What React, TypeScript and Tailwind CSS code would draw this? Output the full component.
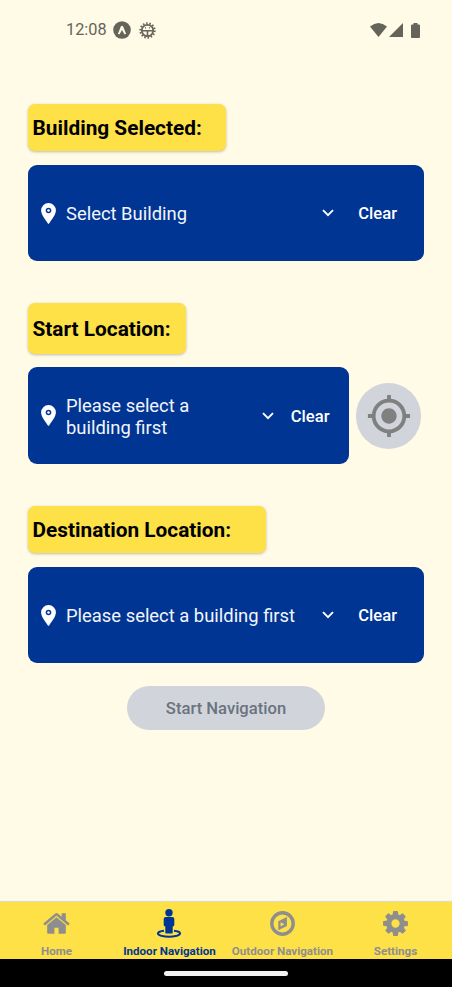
import React from "react";
import { MdMyLocation } from "react-icons/md";

function Pin() {
  return (
    <svg className="h-[21px] w-[15px] shrink-0" viewBox="0 0 15 21">
      <path
        fill="#fff"
        fillRule="evenodd"
        d="M7.500 0A7.400 7.400 0 0 0 .1 7.400C.1 11.600 4.400 16.500 6.700 20.200Q7.500 21.400 8.300 20.200C10.600 16.500 14.900 11.600 14.900 7.400A7.400 7.400 0 0 0 7.500 0ZM7.500 4.700A2.800 2.800 0 1 1 7.500 10.300A2.800 2.800 0 1 1 7.500 4.700Z"
      />
      <circle cx="7.500" cy="7.500" r="1.300" fill="#fff" />
    </svg>
  );
}

function Chevron() {
  return (
    <svg className="h-[8px] w-[12px] shrink-0" viewBox="0 0 12 8" fill="none" stroke="#fff" strokeWidth="1.900">
      <path d="M1 1.200L6 6.200L11 1.200" />
    </svg>
  );
}

function Label({ text, box }: { text: string; box: string }) {
  return (
    <div
      className={`flex items-center rounded-[7px] bg-[#fee047] pl-[4.500px] shadow-[0_1px_3px_rgba(0,0,0,0.25)] ${box}`}
    >
      <h2 className="whitespace-nowrap text-[20.800px] font-bold leading-6 text-black">{text}</h2>
    </div>
  );
}

function Picker({ children, box, wide }: { children: React.ReactNode; box: string; wide?: boolean }) {
  return (
    <div className={`flex items-center rounded-[9px] bg-[#003594] pl-[13px] ${box}`}>
      <Pin />
      <div className="ml-[10px] flex-1 whitespace-nowrap pt-[2px] text-[18.400px] leading-[22px] text-[#f3f5fa]">{children}</div>
      <Chevron />
      <button className={`pt-[2px] text-[16.600px] font-medium leading-5 text-white ${wide ? "mr-[27px] ml-[24px]" : "mr-[19.500px] ml-[17px]"}`}>
        Clear
      </button>
    </div>
  );
}

function StatusBar() {
  return (
    <header className="flex h-[60px] items-center pl-[66px] pr-[32px] text-[#65645b]">
      <span className="w-[41px] text-[16.300px]">12:08</span>
      <svg className="ml-[6px] size-[18px]" viewBox="0 0 18 18">
        <circle cx="9" cy="9" r="8.800" fill="#65645b" />
        <path d="M4.900 12.900L7.700 5.800Q9 3.600 10.300 5.800L13.100 12.900L11.400 13.200L9 8.900L6.600 13.200Z" fill="#fffbe6" />
      </svg>
      <svg className="ml-[8px] size-[17px]" viewBox="0 0 17 17" fill="none" stroke="#65645b">
        <circle cx="8.500" cy="8.500" r="7.200" strokeWidth="2" strokeDasharray="1.500 1.730" />
        <circle cx="8.500" cy="8.500" r="5.700" strokeWidth="1.700" />
        <path d="M2.500 8.700h12M8.500 8.700v5.500" strokeWidth="1.600" />
        <path d="M5.900 5.900h1.200M9.900 5.900h1.200" strokeWidth="1.200" />
      </svg>
      <div className="ml-auto flex items-center">
        <svg className="h-[14px] w-[17px]" viewBox="0 0 17 14" fill="#65645b">
          <path d="M0 3.500Q8.500 -3.500 17 3.500L8.500 14Z" />
        </svg>
        <svg className="ml-[2px] h-[14px] w-[14px]" viewBox="0 0 14 14" fill="#65645b">
          <path d="M14 0V14H0Z" />
        </svg>
        <svg className="ml-[8px] h-[15px] w-[9px]" viewBox="0 0 9 15" fill="#65645b">
          <path d="M2.500 0h4v1.500H8q1 0 1 1V14q0 1-1 1H1q-1 0-1-1V2.500q0-1 1-1h1.500Z" />
        </svg>
      </div>
    </header>
  );
}

function HomeIcon() {
  return (
    <svg className="size-[29px]" viewBox="0 0 1792 1792" fill="#8e8e8f">
      <path d="M1472 992v480q0 26-19 45t-45 19h-384v-384h-256v384h-384q-26 0-45-19t-19-45v-480q0-1 .5-3t.5-3l575-474 575 474q1 2 1 6zm223-69l-62 74q-8 9-21 11h-3q-13 0-21-7l-692-577-692 577q-12 8-24 7-13-2-21-11l-62-74q-8-10-7-23.500t11-21.500l719-599q32-26 76-26t76 26l244 204v-195q0-14 9-23t23-9h192q14 0 23 9t9 23v408l219 182q10 8 11 21.500t-7 23.500z" />
    </svg>
  );
}

function PersonIcon() {
  return (
    <svg className="mr-px h-[29px] w-[24px]" viewBox="0 0 24 29" fill="#003594">
      <circle cx="12" cy="3.800" r="3.700" />
      <path d="M8.800 8h6.400q2.100 0 2.100 2.100v6q0 1.300-1.600 1.300v6q0 1.200-1.200 1.200h-5q-1.200 0-1.200-1.200v-6q-1.600 0-1.600-1.300v-6Q6.700 8 8.800 8Z" />
      <path
        d="M7 21.800C-.2 22.600-.8 25.400 4.200 26.800Q12 28.700 19.800 26.800C24.800 25.400 24.200 22.600 17 21.800"
        fill="none"
        stroke="#003594"
        strokeWidth="2"
      />
    </svg>
  );
}

function CompassIcon() {
  return (
    <svg className="size-[25px]" viewBox="0 0 25 25">
      <circle cx="12.500" cy="12.500" r="10.700" fill="none" stroke="#8e8e8f" strokeWidth="3.400" />
      <path fill="#8e8e8f" fillRule="evenodd" d="M16.900 6V14.900L8.300 19.200V10.300ZM10.600 15.400L14.400 13.300L10.600 11.300Z" />
    </svg>
  );
}

function GearIcon() {
  return (
    <svg className="size-[29px]" viewBox="0 0 1792 1792" fill="#8e8e8f">
      <path d="M1152 896q0-106-75-181t-181-75-181 75-75 181 75 181 181 75 181-75 75-181zm512-109v222q0 12-8 23t-20 13l-185 28q-19 54-39 91 35 50 107 138 10 12 10 25t-9 23q-27 37-99 108t-94 71q-12 0-26-9l-138-108q-44 23-91 38-16 136-29 186-7 28-36 28h-222q-14 0-24.500-8.500t-11.500-21.500l-28-184q-49-16-90-37l-141 107q-10 9-25 9-14 0-25-11-126-114-165-168-7-10-7-23 0-12 8-23 15-21 51-66.500t54-70.500q-27-50-41-99l-183-27q-13-2-21-12.500t-8-23.500v-222q0-12 8-23t19-13l186-28q14-46 39-92-40-57-107-138-10-12-10-24 0-10 9-23 26-36 98.500-107.500t94.500-71.500q13 0 26 10l138 107q44-23 91-38 16-136 29-186 7-28 36-28h222q14 0 24.500 8.500t11.500 21.500l28 184q49 16 90 37l142-107q9-9 24-9 13 0 25 10 129 119 165 170 7 8 7 22 0 12-8 23-15 21-51 66.500t-54 70.500q26 50 41 98l183 28q13 2 21 12.500t8 23.500z" />
    </svg>
  );
}

function Tab({ icon, label, active }: { icon: React.ReactNode; label: string; active?: boolean }) {
  return (
    <div className="flex flex-1 flex-col items-center">
      <div className="flex h-[42px] items-center justify-center">{icon}</div>
      <span className={`whitespace-nowrap text-[11.600px] font-bold leading-[15px] ${active ? "text-[#003594]" : "text-[#8e8e8f]"}`}>
        {label}
      </span>
    </div>
  );
}

export default function App() {
  return (
    <div className="flex h-[987px] w-[452px] flex-col overflow-hidden bg-[#fffbe6] font-['Roboto',sans-serif]">
      <StatusBar />
      <main className="flex flex-1 flex-col px-[28px] pt-[44px]">
        <Label text="Building Selected:" box="h-[47px] w-[198px]" />
        <Picker box="mt-[14px] h-[96px]" wide>Select Building</Picker>

        <Label text="Start Location:" box="mt-[42px] h-[51px] w-[158px]" />
        <div className="mt-[13px] flex items-center">
          <Picker box="h-[97px] w-[321px]">
            Please select a<br />
            building first
          </Picker>
          <button className="ml-[7px] flex h-[66px] w-[65px] items-center justify-center rounded-full bg-[#d1d5db]">
            <MdMyLocation className="size-[46px] text-[#808080]" />
          </button>
        </div>

        <Label text="Destination Location:" box="mt-[42px] h-[47px] w-[238px]" />
        <Picker box="mt-[14px] h-[96px]" wide>Please select a building first</Picker>

        <button className="mt-[23px] ml-[99px] h-[44px] w-[198px] rounded-full bg-[#d1d5db] pt-[3px] text-[16.600px] font-medium text-[#6b7280]">
          Start Navigation
        </button>
      </main>
      <nav className="flex h-[57px] bg-[#fee047] shadow-[0_-1px_1px_rgba(0,0,0,0.12)]">
        <Tab icon={<HomeIcon />} label="Home" />
        <Tab icon={<PersonIcon />} label="Indoor Navigation" active />
        <Tab icon={<CompassIcon />} label="Outdoor Navigation" />
        <Tab icon={<GearIcon />} label="Settings" />
      </nav>
      <div className="flex h-[28px] items-center justify-center bg-black">
        <div className="h-[5px] w-[124px] rounded-full bg-[#f2f2f2]" />
      </div>
    </div>
  );
}
